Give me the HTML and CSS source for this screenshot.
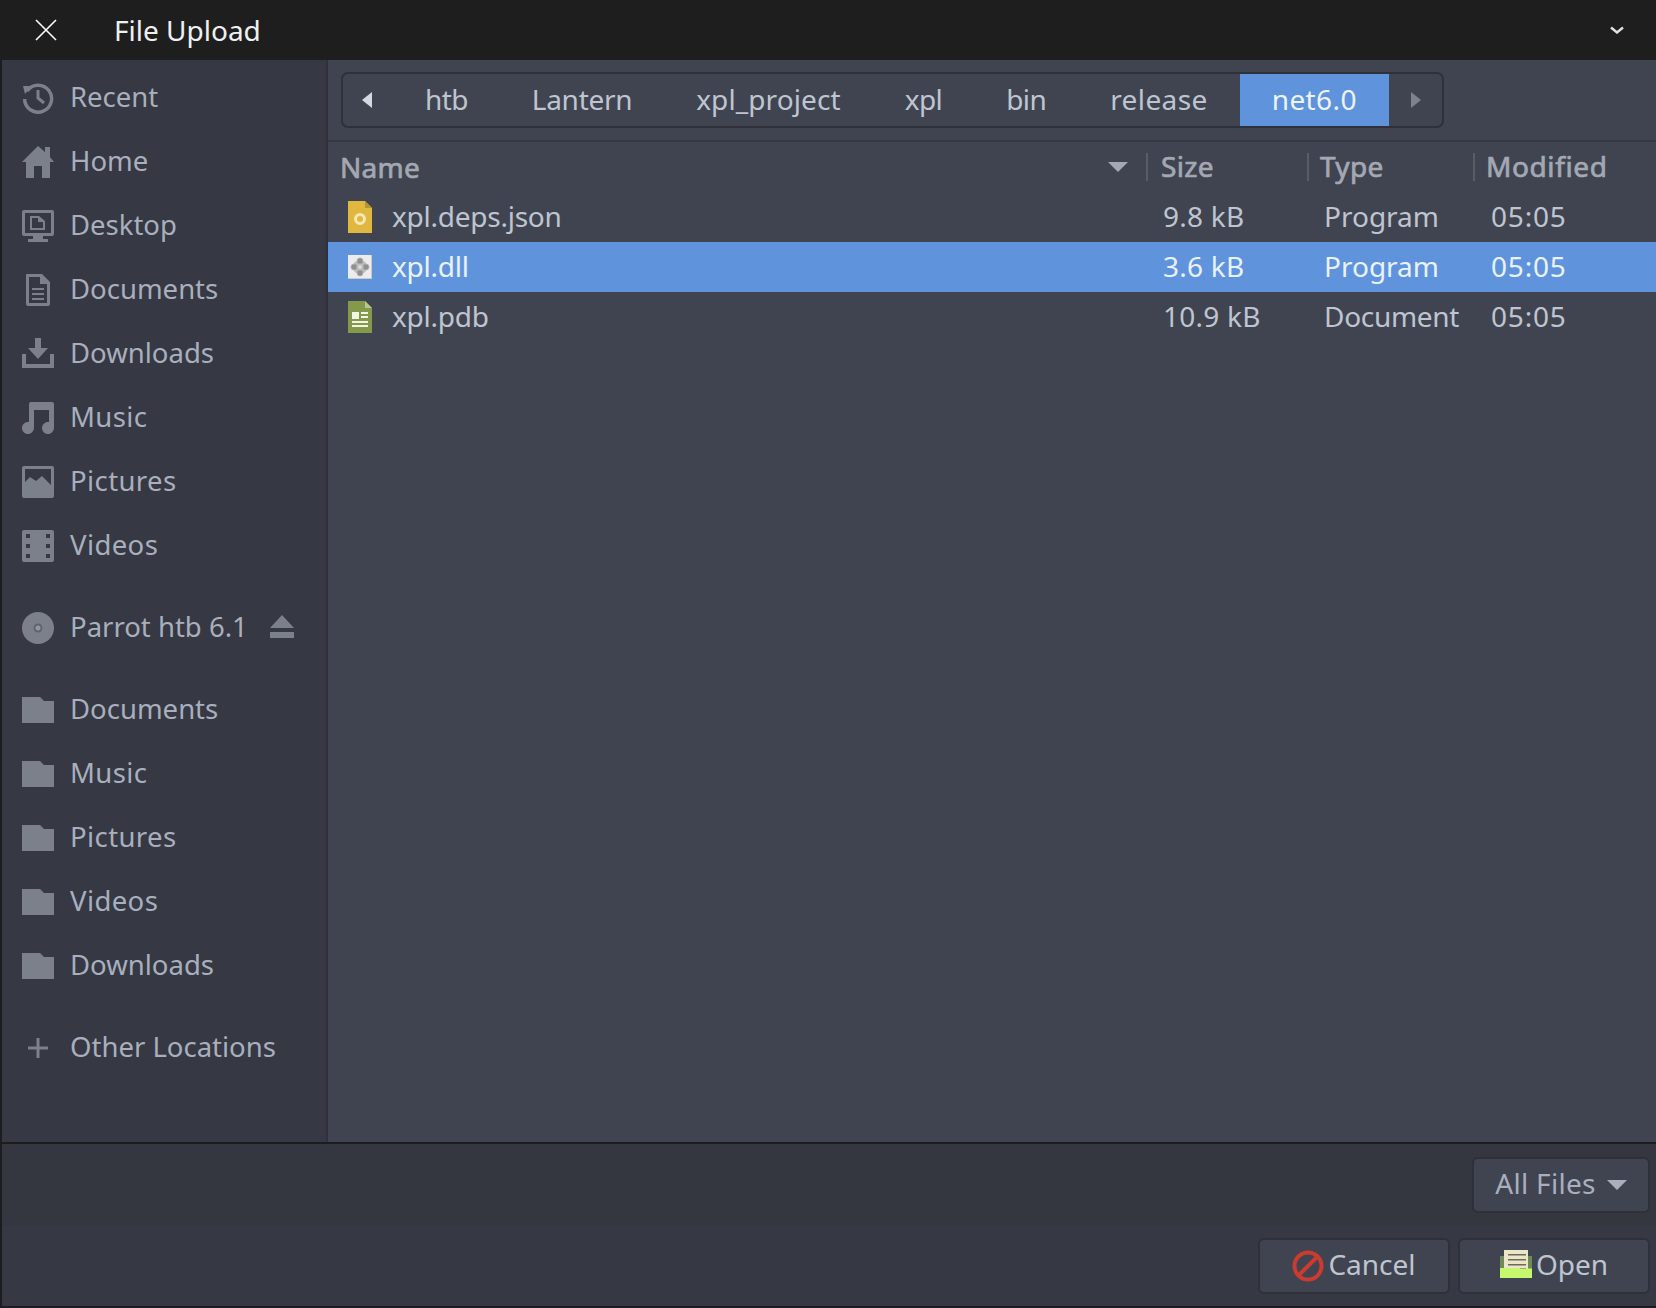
FILE: index.html
```html
<!DOCTYPE html>
<html lang="en">
<head>
<meta charset="utf-8">
<title>File Upload</title>
<link rel="stylesheet" href="styles.css">
</head>
<body>
<div class="window">
  <header class="titlebar">
    <svg class="close" viewBox="0 0 22 22"><path d="M1 1 21 21M21 1 1 21"/></svg>
    <span class="title">File Upload</span>
    <svg class="menu" viewBox="0 0 14 8"><path d="M1 1.5 7 6.5 13 1.5"/></svg>
  </header>
  <div class="content">
    <nav class="sidebar">
      <div class="place"><svg class="ico" viewBox="0 0 32 32"><path class="st" d="M5 9A13.5 13.5 0 1 1 2.6 17"/><path d="M1 4 10 4 3 12Z"/><path class="st2" d="M16 8v8l6 5"/></svg><span>Recent</span></div>
      <div class="place"><svg class="ico" viewBox="0 0 32 32"><path d="M16 0 23 6V1h5v10l4 5h-4v16h-8V20h-8v12H4V16H0Z"/></svg><span>Home</span></div>
      <div class="place"><svg class="ico" viewBox="0 0 32 32"><path fill-rule="evenodd" d="M2 0H30a2 2 0 0 1 2 2V24a2 2 0 0 1-2 2H2a2 2 0 0 1-2-2V2A2 2 0 0 1 2 0ZM3 3V23H29V3ZM8 6H17L23 11V20H8ZM10 8V18H21V12H16V8ZM11 26H21V29H26V32H6V29H11Z"/></svg><span>Desktop</span></div>
      <div class="place"><svg class="ico" viewBox="0 0 32 32"><path fill-rule="evenodd" d="M5 0H20L28 8V30a2 2 0 0 1-2 2H6a2 2 0 0 1-2-2V1A1 1 0 0 1 5 0ZM7 3V29H25V10H18V3ZM10 14H22V16H10ZM10 19H22V21H10ZM10 24H22V26H10Z"/></svg><span>Documents</span></div>
      <div class="place"><svg class="ico" viewBox="0 0 32 32"><path d="M13 0H19V10H26L16 21 6 10H13ZM0 16H4V26H28V16H32V30H0Z"/></svg><span>Downloads</span></div>
      <div class="place"><svg class="ico" viewBox="0 0 32 32"><path d="M9 0H30a2 2 0 0 1 2 2V26a6 6 0 1 1-5-5.900V8H12V26a6 6 0 1 1-5-5.900V2A2 2 0 0 1 9 0Z"/></svg><span class="wide">Music</span></div>
      <div class="place"><svg class="ico" viewBox="0 0 32 32"><path fill-rule="evenodd" d="M2 0H30a2 2 0 0 1 2 2V30a2 2 0 0 1-2 2H2a2 2 0 0 1-2-2V2A2 2 0 0 1 2 0ZM3 3V16L8 11 14 15 20 10 29 19V3Z"/></svg><span class="wide">Pictures</span></div>
      <div class="place"><svg class="ico" viewBox="0 0 32 32"><path fill-rule="evenodd" d="M2 0H30a2 2 0 0 1 2 2V30a2 2 0 0 1-2 2H2a2 2 0 0 1-2-2V2A2 2 0 0 1 2 0ZM4 4V8H8V4ZM24 4V8H28V4ZM4 14V18H8V14ZM24 14V18H28V14ZM4 24V28H8V24ZM24 24V28H28V24Z"/></svg><span class="wide">Videos</span></div>
      <div class="gap"></div>
      <div class="place"><svg class="ico" viewBox="0 0 32 32"><circle cx="16" cy="16" r="16"/><circle class="disc-ring" cx="16" cy="16" r="3.500"/></svg><span class="grow">Parrot htb 6.1</span><svg class="eject" viewBox="0 0 26 24"><path d="M13 0 25 13H1ZM1 17H25V23H1Z"/></svg></div>
      <div class="gap"></div>
      <div class="place"><svg class="ico folder" viewBox="0 0 32 26"><path d="M0 0H18L22 4H32V26H0Z"/></svg><span>Documents</span></div>
      <div class="place"><svg class="ico folder" viewBox="0 0 32 26"><path d="M0 0H18L22 4H32V26H0Z"/></svg><span class="wide">Music</span></div>
      <div class="place"><svg class="ico folder" viewBox="0 0 32 26"><path d="M0 0H18L22 4H32V26H0Z"/></svg><span class="wide">Pictures</span></div>
      <div class="place"><svg class="ico folder" viewBox="0 0 32 26"><path d="M0 0H18L22 4H32V26H0Z"/></svg><span class="wide">Videos</span></div>
      <div class="place"><svg class="ico folder" viewBox="0 0 32 26"><path d="M0 0H18L22 4H32V26H0Z"/></svg><span>Downloads</span></div>
      <div class="gap"></div>
      <div class="place"><svg class="ico" viewBox="0 0 32 32"><path d="M14.500 6H17.500V14.500H26V17.500H17.500V26H14.500V17.500H6V14.500H14.500Z"/></svg><span>Other Locations</span></div>
    </nav>
    <main class="main">
      <div class="pathwrap">
        <div class="pathbar">
          <div class="arrow-btn"><svg class="arr" viewBox="0 0 10 16"><path class="light" d="M10 0V16L0 8Z"/></svg></div>
          <div class="crumb narrow">htb</div>
          <div class="crumb tight">Lantern</div>
          <div class="crumb slight">xpl_project</div>
          <div class="crumb narrow">xpl</div>
          <div class="crumb narrow">bin</div>
          <div class="crumb wide">release</div>
          <div class="crumb wide active">net6.0</div>
          <div class="arrow-btn right"><svg class="arr" viewBox="0 0 10 16"><path d="M0 0V16L10 8Z"/></svg></div>
        </div>
      </div>
      <div class="list">
        <div class="head row">
          <div class="hname"><span class="grow">Name</span><svg class="sort" viewBox="0 0 20 10"><path d="M0 0H20L10 10Z"/></svg></div>
          <div class="hcell hsize">Size</div>
          <div class="hcell htype">Type</div>
          <div class="hcell hmod">Modified</div>
        </div>
        <div class="row file">
          <div class="fname"><svg class="fico" viewBox="0 0 24 32"><path fill="#e0b73f" d="M0 0H17L24 7V32H0Z"/><path fill="#b4933a" d="M17 0 24 7H17Z"/><circle cx="12" cy="18" r="4.500" fill="none" stroke="#f6e7b4" stroke-width="3"/></svg><span>xpl.deps.json</span></div>
          <div class="size">9.8 kB</div><div class="type">Program</div><div class="mod">05:05</div>
        </div>
        <div class="row file selected">
          <div class="fname"><svg class="fico" viewBox="0 0 24 32"><path fill="#ececec" d="M0 4H24V28H0Z"/><path fill="#c9c9c9" d="M0 27H24V28H0ZM23 4H24V28H23Z"/><path fill="#bdbdbd" d="M12 6 22 16 12 26 2 16Z"/><path fill="#8f8f8f" d="M9.500 7.500H14.500V12.500H9.500ZM9.500 19.500H14.500V24.500H9.500ZM3.500 13.500H8.500V18.500H3.500ZM15.500 13.500H20.500V18.500H15.500Z"/><path fill="#dcdcdc" d="M10.500 14.500H13.500V17.500H10.500Z"/></svg><span>xpl.dll</span></div>
          <div class="size">3.6 kB</div><div class="type">Program</div><div class="mod">05:05</div>
        </div>
        <div class="row file">
          <div class="fname"><svg class="fico" viewBox="0 0 24 32"><path fill="#84994a" d="M0 0H17L24 7V32H0Z"/><path fill="#b9c68f" d="M17 0 24 7H17Z"/><path fill="#f2f5e6" d="M4 11H11V18H4ZM13 11H20V13H13ZM13 15H20V17H13ZM4 20H20V22H4ZM4 24H20V26H4Z"/></svg><span>xpl.pdb</span></div>
          <div class="size">10.9 kB</div><div class="type doc">Document</div><div class="mod">05:05</div>
        </div>
      </div>
    </main>
  </div>
  <div class="filterbar">
    <div class="btn filter">All Files<svg class="drop" viewBox="0 0 20 10"><path d="M0 0H20L10 10Z"/></svg></div>
  </div>
  <footer class="actions">
    <div class="btn cancel"><svg class="bico" viewBox="0 0 32 32"><circle cx="16" cy="16" r="13.500" fill="none" stroke="#cc3b30" stroke-width="4"/><path d="M7 25 25 7" stroke="#cc3b30" stroke-width="4"/></svg>Cancel</div>
    <div class="btn open"><svg class="bico" viewBox="0 0 32 32"><path fill="#6e8a55" d="M0 6H32V20H0Z"/><path fill="#ebe6c8" d="M4 0H28V20H4Z"/><path fill="#6a6a5e" d="M8 4H26V5.500H8ZM8 9H26V10.500H8ZM8 14H26V15.500H8ZM20 18H26V20H20Z"/><path fill="#c5f76f" d="M0 18H20V18.500H32V28H0Z"/></svg>Open</div>
  </footer>
</div>
</body>
</html>
```
FILE: styles.css
```css
* { box-sizing: border-box; }
html, body { margin: 0; padding: 0; height: 100%; overflow: hidden; }
body { background: #1e1e1e; font-family: "Noto Sans", sans-serif; font-size: 28px; }
.window { width: 1656px; height: 1308px; padding: 0 0 2px 2px; display: flex; flex-direction: column; background: #1c1d21; color: #a8afbd; }
.titlebar { height: 60px; flex: none; margin-left: -2px; padding-left: 35px; padding-right: 8px; background: #1e1e1e; display: flex; align-items: center; color: #eef0f3; }
.close { width: 22px; height: 22px; flex: none; margin-right: 57px; }
.close path { stroke: #fff; stroke-width: 1.6; fill: none; }
.title { flex: 1; }
.menu { width: 14px; height: 8px; margin-right: 24px; }
.menu path { stroke: #dfe1e5; stroke-width: 2.4; fill: none; }
.content { height: 1084px; flex: none; display: flex; border-bottom: 2px solid #1b1c20; }
.sidebar { width: 326px; flex: none; padding-top: 6px; background: #363843; border-right: 2px solid #2f313b; font-size: 27.5px; }
.place { height: 64px; padding-left: 20px; padding-right: 31px; display: flex; align-items: center; gap: 16px; }
.place span { padding-bottom: 3px; }
.place .wide { letter-spacing: 0.4px; }
.gap { height: 18px; }
.grow { flex: 1; }
.ico { width: 32px; height: 32px; flex: none; fill: #7b808b; }
.ico.folder { height: 26px; }
.disc-ring { fill: #9297a1; stroke: #5f636e; stroke-width: 2; }
.st { fill: none; stroke: #7b808b; stroke-width: 3.500; }
.st2 { fill: none; stroke: #7b808b; stroke-width: 3; }
.eject { width: 26px; height: 24px; fill: #7b808b; margin-bottom: 2px; }
.main { flex: 1; min-width: 0; background: #404450; color: #bfc5d0; }
.pathwrap { height: 82px; padding-top: 12px; border-bottom: 2px solid #353742; }
.pathbar { width: 1103px; height: 56px; margin-left: 13px; border: 2px solid #2e303a; border-radius: 7px; display: flex; align-items: stretch; }
.crumb { padding: 0 32px 2px; display: flex; align-items: center; }
.crumb.tight { letter-spacing: -0.3px; }
.crumb.slight { letter-spacing: 0.1px; }
.crumb.narrow { letter-spacing: -0.6px; }
.crumb.wide { letter-spacing: 0.4px; }
.crumb.active { background: #5f93dc; color: #eef4fd; }
.arrow-btn { width: 50px; flex: none; display: flex; align-items: center; padding-left: 19px; }
.arrow-btn.right { flex: 1; padding-left: 22px; }
.arr { width: 10px; height: 16px; fill: #7d828d; }
.arr .light { fill: #d5d9e0; }
.row { display: grid; grid-template-columns: 818px 161px 166px 1fr; align-items: center; }
.head { height: 50px; color: #a3a8b3; }
.head .hname span, .hcell { -webkit-text-stroke: 0.7px #a3a8b3; letter-spacing: 0.3px; }
.hname { padding: 0 18px 0 12px; display: flex; align-items: center; }
.sort { width: 20px; height: 10px; fill: #a3a8b3; }
.hcell { height: 28px; line-height: 26px; border-left: 2px solid #585c67; padding-left: 11px; }
.hsize { padding-left: 13px; }
.hcell.hmod { letter-spacing: 0.6px; }
.file { height: 50px; padding-bottom: 3px; }
.fname { display: flex; align-items: center; padding-left: 20px; gap: 20px; letter-spacing: -0.25px; }
.fico { width: 24px; height: 32px; flex: none; margin-top: 3px; }
.size { padding-left: 17px; letter-spacing: 0.25px; }
.type { padding-left: 17px; }
.type.doc { letter-spacing: -0.3px; }
.mod { padding-left: 18px; letter-spacing: 0.8px; }
.selected { background: #5f93dc; color: #eaf2ff; }
.filterbar { height: 82px; flex: none; background: #343640; display: flex; align-items: center; justify-content: flex-end; padding-right: 6px; }
.actions { flex: 1; background: #363843; display: flex; justify-content: flex-end; align-items: flex-start; gap: 8px; padding: 12px 6px 0 0; }
.btn { height: 56px; padding-bottom: 4px; border: 2px solid #2e303a; border-radius: 6px; background: #404450; display: flex; align-items: center; justify-content: center; }
.filter { width: 178px; gap: 11px; letter-spacing: 0.3px; }
.drop { width: 20px; height: 10px; fill: #a8afbd; margin-top: 4px; }
.cancel { width: 192px; color: #bfc5d0; }
.open { width: 192px; color: #bfc5d0; }
.bico { width: 32px; height: 32px; flex: none; margin-right: 4px; margin-top: 4px; }
```
